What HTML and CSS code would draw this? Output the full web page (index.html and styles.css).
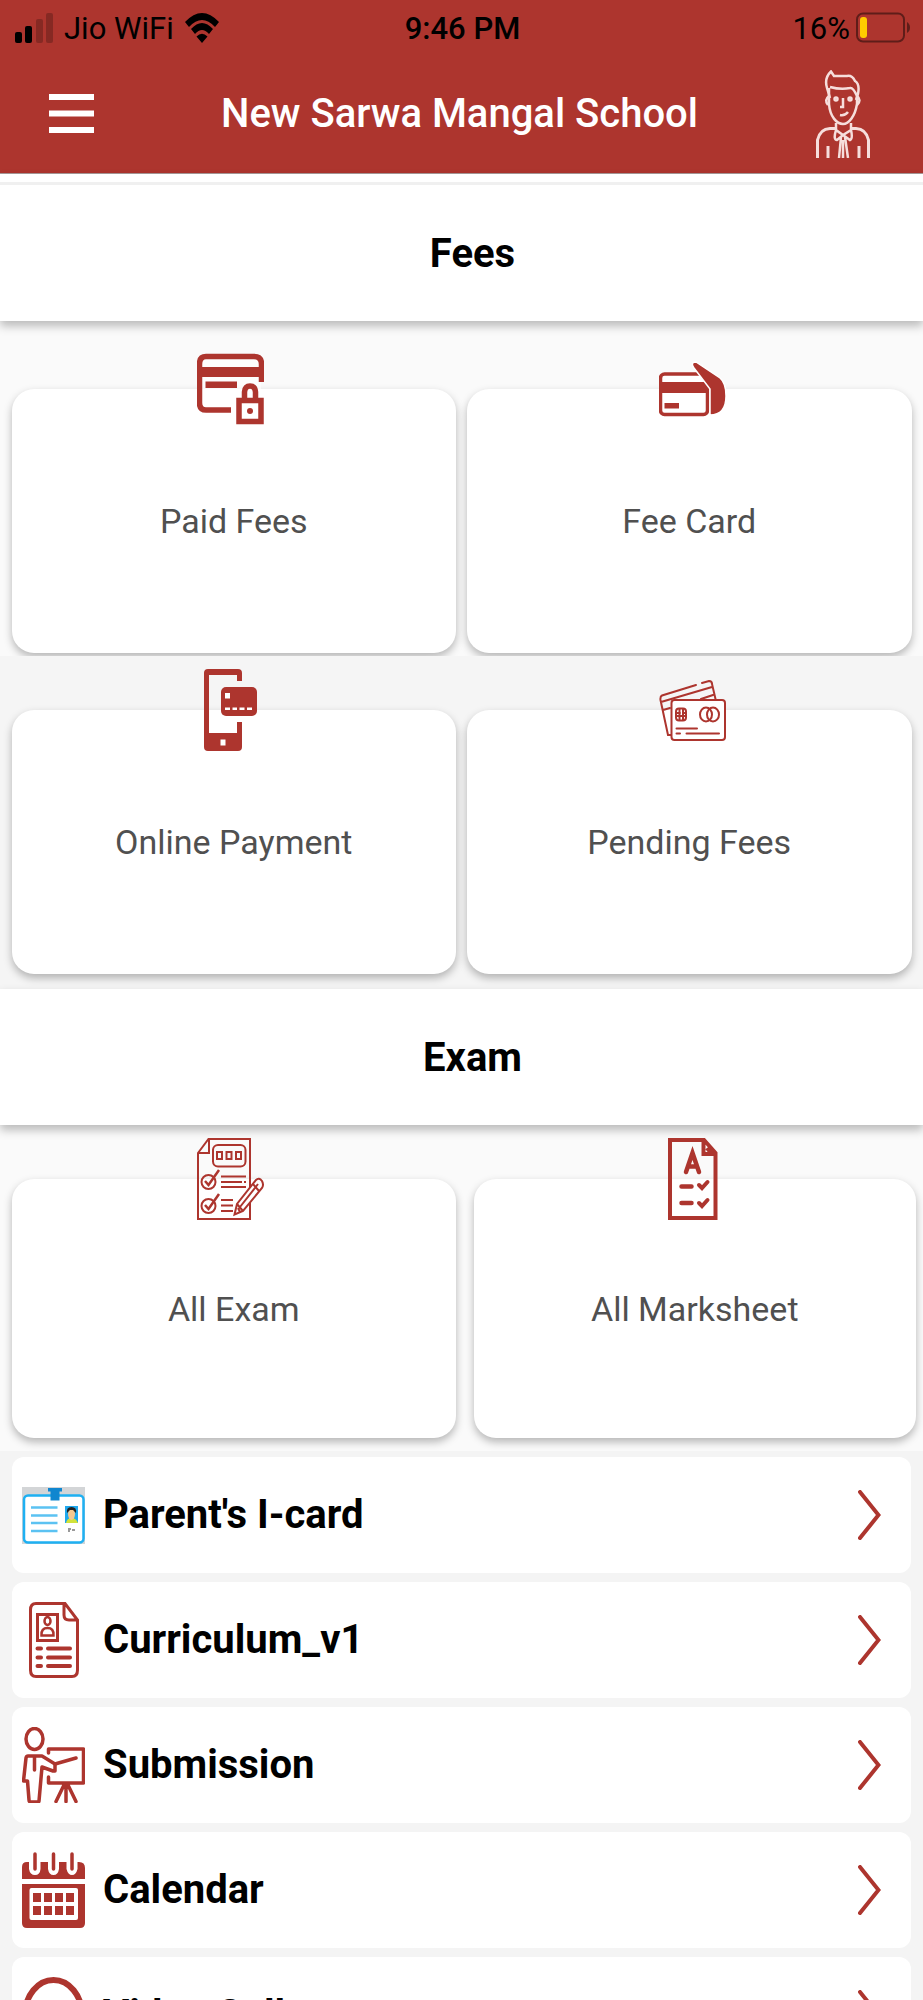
FILE: index.html
```html
<!DOCTYPE html>
<html lang="en">
<head>
<meta charset="utf-8">
<meta name="viewport" content="width=device-width, initial-scale=1">
<title>New Sarwa Mangal School</title>
<link rel="stylesheet" href="styles.css">
</head>
<body>
<div class="app">
  <header class="top">
    <div class="status">
      <div class="status-side">
        <svg class="signal" viewBox="0 0 38 30" aria-hidden="true"><rect x="0" y="19" width="7" height="11" rx="2"/><rect x="10" y="13" width="7" height="17" rx="2"/><g opacity=".22"><rect x="21" y="6" width="7" height="24" rx="2"/><rect x="31" y="0" width="7" height="30" rx="2"/></g></svg>
        <span>Jio WiFi</span>
        <svg class="wifi" viewBox="0 0 34 30" aria-hidden="true"><path d="M0 9Q17-9 34 9L30 14Q17 0 4 14ZM6 16Q17 4 28 16L24 21Q17 13 10 21ZM11.500 23.500Q17 18 22.500 23.500L17 30Z"/></svg>
      </div>
      <span class="clock">9:46 PM</span>
      <div class="status-side status-right">
        <span>16%</span>
        <svg class="battery" viewBox="0 0 54 32" aria-hidden="true"><rect x="1" y="1.500" width="47" height="28" rx="6" fill="none" stroke="#000" stroke-opacity=".45" stroke-width="2"/><rect x="4" y="5" width="7" height="21" rx="3" fill="#ffcc00"/><path d="M51 10Q54 12 54 15.500T51 21Z" fill-opacity=".45"/></svg>
      </div>
    </div>
    <div class="bar">
      <button class="icon-btn" aria-label="Menu"><svg class="menu" viewBox="0 0 45 39"><path d="M0 3H45M0 19.500H45M0 36H45" stroke="#fff" stroke-width="6"/></svg></button>
      <h1>New Sarwa Mangal School</h1>
      <button class="icon-btn profile" aria-label="Profile"><svg class="avatar" viewBox="0 0 54 88" fill="none" stroke="#f6dedc" stroke-width="2.500">
        <path d="M14 28 11 18Q8 8 15 1.500L18 6H31Q36 5 39 11 44 14 42 24L40 30"/>
        <path d="M14 17Q25 20 34 18 37 17 41 26M13 18 13 34C14 47 21 54 27 54S39 46 41 34V26"/>
        <path d="M13 26Q8 30 12 35M41 26Q46 30 41 35M27 28V37H24M24 45Q29 46 32 42"/>
        <circle cx="20" cy="29" r="1.500"/><circle cx="34" cy="29" r="1.500"/>
        <path d="M20 53V60L27 65 35 60V53M20 60Q17 70 21 70L27 65 34 70Q37 69 35 60M25 67 23 88M29 67 32 88M27 70V88"/>
        <path d="M1.500 88V70Q4 59 14 58.500H19M36 58.500H40Q50 59 52.500 70V88M12 76V88M43 76V88" stroke-width="3"/>
      </svg></button>
    </div>
  </header>

  <main>
    <h2 class="section first">Fees</h2>
    <div class="tiles light">
      <a class="tile" href="#paid">
        <svg class="tile-icon" viewBox="0 0 67 82"><rect x="2.500" y="8.500" width="61.500" height="53.500" rx="6" fill="#fff" fill-opacity=".6"/><path d="M34 62H9Q2.500 62 2.500 55V16Q2.500 8.500 9 8.500H57Q64.500 8.500 64.500 16V34" fill="none" stroke="#ad352e" stroke-width="5.500"/><path d="M2 19H64V29H2ZM8.500 33.500H40V40H8.500Z" fill="#ad352e"/><path d="M34 42H67V82H38V62H34Z" fill="#fff" fill-opacity=".9"/><path d="M42 52.500H64V73.500H42Z" fill="#fff" stroke="#ad352e" stroke-width="5.500"/><path d="M47.500 52V44Q48 38 53 38T58.500 44V52" fill="none" stroke="#ad352e" stroke-width="5.500"/><circle cx="53" cy="63" r="3" fill="#ad352e"/></svg>
        <span class="card">Paid Fees</span>
      </a>
      <a class="tile" href="#card">
        <svg class="tile-icon" viewBox="0 0 67 82"><rect x="1.500" y="26" width="47" height="40.500" rx="4" fill="#fff" stroke="#ad352e" stroke-width="3.500"/><path d="M2 34H48V45H2ZM5.500 55H20V60.500H5.500Z" fill="#ad352e"/><path d="M35 20Q31 14 37 14L61 30Q67 35 67 48 67 67 51 67V41Z" fill="#ad352e" stroke="#fff" stroke-width="1.500"/></svg>
        <span class="card">Fee Card</span>
      </a>
    </div>
    <div class="tiles">
      <a class="tile" href="#pay">
        <svg class="tile-icon" viewBox="0 0 67 82"><path d="M11 0H41Q45 0 45 4V12H40V6H12V64H40V53H45V78Q45 82 41 82H11Q7 82 7 78V4Q7 0 11 0Z" fill="#ad352e"/><rect x="24" y="18" width="36" height="29" rx="5" fill="#ad352e"/><path d="M28 24H33V29.500H28ZM28 38.500H33V41H28ZM35.500 38.500H40V41H35.500ZM42.500 38.500H47.500V41H42.500ZM50 38.500H55V41H50ZM23.500 70.500H28.500V76.500H23.500Z" fill="#fff"/></svg>
        <span class="card">Online Payment</span>
      </a>
      <a class="tile" href="#pending">
        <svg class="tile-icon" viewBox="0 0 67 82" fill="none" stroke="#ad352e" stroke-width="2" stroke-linecap="round"><path d="M37 16 3 26.500Q1 27.500 1.500 31L9 66H12M43 14 50 12Q53 12 53 15L56.500 30M2 33 53 18M4 41 11 39M42 30 54 26"/><rect x="12.500" y="31" width="53.500" height="40" rx="3" fill="#fff"/><rect x="17" y="39.500" width="10" height="12" rx="3"/><path d="M20.500 40V51M24 40V51M17.500 44H21M17.500 47H27M24 44H27M17.500 59.500H38M17.500 64.500H21M27.500 64.500H60"/><ellipse cx="47" cy="45.500" rx="6" ry="7"/><ellipse cx="54" cy="45.500" rx="6" ry="7"/></svg>
        <span class="card">Pending Fees</span>
      </a>
    </div>

    <h2 class="section">Exam</h2>
    <div class="tiles light exam">
      <a class="tile" href="#exam">
        <svg class="tile-icon" viewBox="0 0 67 82" fill="none" stroke="#ad352e" stroke-width="2"><path d="M1 15 11.500 1H53V81H1ZM1 15H12V1"/><rect x="16" y="7" width="32.500" height="21.500" rx="5"/><path d="M20 14H25V21H20ZM29.500 14H34.500V21H29.500ZM39 14H44V21H39ZM24 38.500H49M24 44H45M47 44H49M24 49H49M24 62H36M24 67.500H36M24 73H36" /><circle cx="11.500" cy="44" r="7"/><circle cx="11.500" cy="68" r="7"/><path d="M8 43 11.500 47 22 32M8 67 11.500 71 22 56" stroke-width="2.500"/><path d="M37.500 76.500 40 66 59 42Q62 39 65 43 67 47 65 50L46 73ZM40 66 46 73M43 69 61 46M56 46 62 53M41 70 43 74" fill="#fff"/></svg>
        <span class="card">All Exam</span>
      </a>
      <a class="tile" href="#marks">
        <svg class="tile-icon" viewBox="0 0 67 82" fill="none" stroke="#ad352e" stroke-width="4"><path d="M11 2H45L56.500 15V80H11ZM44.500 3V16H56M48 10 52 15"/><path d="M27 34 33.500 15 40 34M29 28.500H38M22.500 48.500H32.500M22.500 65H32.500" stroke-linecap="round" stroke-width="4.500"/><path d="M40 47 43 50 48.500 44M40 65 43 68 48.500 62" stroke-linecap="round" stroke-width="4"/></svg>
        <span class="card">All Marksheet</span>
      </a>
    </div>

    <nav class="list">
      <a class="row" href="#icard">
        <svg class="row-icon" viewBox="0 0 63 76"><path d="M0 10H63V67H0Z" fill="#d3d5d7"/><rect x="2" y="18.500" width="59.500" height="47" rx="4" fill="#fff" stroke="#1eb0f2" stroke-width="2.500"/><path d="M26 11H40V14.500H37.500V23.500H28.500V14.500H26Z" fill="#1086cf"/><path d="M9 30.500H35.500M9 38.500H35.500M9 46H35.500M9 54H35.500" stroke="#5bc2f2" stroke-width="2.500"/><path d="M43 29H56V46H43Z" fill="#1ea8ee"/><path d="M44 46Q45 41 49.500 41T56 46Z" fill="#d2e23a"/><ellipse cx="49.500" cy="37" rx="3.500" ry="6" fill="#f6c78f"/><path d="M45 36Q44 30 49.500 30T54 36L51 33H48Z" fill="#222"/><path d="M46 52H49M50 53H53M46 54H48" stroke="#999" stroke-width="2"/></svg>
        <span class="row-text">Parent's I-card</span>
        <svg class="chevron" viewBox="0 0 23 50"><path d="M2 2 20.500 25 2 48"/></svg>
      </a>
      <a class="row" href="#curriculum">
        <svg class="row-icon" viewBox="0 0 63 76" fill="none" stroke="#ad352e" stroke-width="3"><path d="M43 1.500H14Q8.500 1.500 8.500 8V68Q8.500 74.500 14 74.500H50Q55.500 74.500 55.500 68V18ZM42 2V13Q42 18 47 18H55"/><rect x="15.500" y="12.500" width="20" height="26"/><ellipse cx="25.500" cy="19" rx="3" ry="4" stroke-width="2.500"/><path d="M19.500 33.500Q19 26 25.500 26T31.500 33.500Z" stroke-width="2.500"/><path d="M15.500 46.500H19M26 46.500H48M15.500 55.500H19M26 55.500H48M15.500 64H19M26 64H48" stroke-linecap="round" stroke-width="4"/></svg>
        <span class="row-text">Curriculum_v1</span>
        <svg class="chevron" viewBox="0 0 23 50"><path d="M2 2 20.500 25 2 48"/></svg>
      </a>
      <a class="row" href="#submission">
        <svg class="row-icon" viewBox="0 0 63 76" fill="none" stroke="#ad352e" stroke-width="3.500" stroke-linecap="round" stroke-linejoin="round"><ellipse cx="12.500" cy="12" rx="8.500" ry="10.500"/><path d="M12.500 29V43M6 29H20L33 37V44H31L20 40 17 74Q17 75 15 75H9Q7 75 7 73L5.500 54H1.500L4 31Q4.500 29 6 29Z"/><path d="M33 37 54 31M26.500 26V22H61.500V56H26.500V50M44 57V74.500M42 58 34 74.500M46 58 54 74.500"/></svg>
        <span class="row-text">Submission</span>
        <svg class="chevron" viewBox="0 0 23 50"><path d="M2 2 20.500 25 2 48"/></svg>
      </a>
      <a class="row" href="#calendar">
        <svg class="row-icon" viewBox="0 0 63 76" fill="#ad352e"><path d="M0 27V15Q0 10 5 10H7V17Q8 23 13 23T18.500 17V10H26V17Q27 23 31.500 23T37 17V10H44.500V17Q46 23 50 23T55.500 17V10H57Q63 10 63 16V27Z"/><path d="M13 2V17M31.500 2V17M50 2V17" stroke="#ad352e" stroke-width="3.500" stroke-linecap="round"/><path d="M0 32H63V71Q63 76 58 76H5Q0 76 0 71Z"/><rect x="7.500" y="36" width="48.500" height="32" rx="2" fill="#fff"/><path d="M11 41H19V50H11ZM22 41H30V50H22ZM33 41H41V50H33ZM44 41H52V50H44ZM11 54H19V63H11ZM22 54H30V63H22ZM33 54H41V63H33ZM44 54H52V63H44Z"/></svg>
        <span class="row-text">Calendar</span>
        <svg class="chevron" viewBox="0 0 23 50"><path d="M2 2 20.500 25 2 48"/></svg>
      </a>
      <a class="row" href="#video">
        <svg class="row-icon" viewBox="0 0 63 76" fill="none" stroke="#ad352e" stroke-width="6"><ellipse cx="31.500" cy="38" rx="28.500" ry="35"/><path d="M18 28H37V48H18ZM37 36 47 29V47L37 40" stroke-width="4"/></svg>
        <span class="row-text">Video Call</span>
        <svg class="chevron" viewBox="0 0 23 50"><path d="M2 2 20.500 25 2 48"/></svg>
      </a>
    </nav>
  </main>
</div>
</body>
</html>
```
FILE: styles.css
```css
* { box-sizing: border-box; }
body {
  margin: 0;
  background: #f4f4f4;
  color: #000;
  font-family: Roboto, "Liberation Sans", sans-serif;
}
svg { display: block; flex: none; }
a { color: inherit; text-decoration: none; }
h1, h2 { margin: 0; }

.app {
  height: 100vh;
  overflow: hidden;
}

.top {
  background: #ad352e;
  border-bottom: 1px solid #a89a99;
}
.status {
  display: grid;
  grid-template-columns: 1fr auto 1fr;
  align-items: center;
  height: 56px;
  padding: 0 13px 0 15px;
  font-size: 31px;
}
.status-side { display: flex; align-items: center; gap: 11px; }
.status-right { justify-content: flex-end; gap: 6px; }
.clock { font-weight: 500; }
.signal { width: 38px; height: 30px; }
.wifi { width: 34px; height: 30px; }
.battery { width: 54px; height: 32px; }

.bar {
  display: grid;
  grid-template-columns: 1fr auto 1fr;
  align-items: center;
  height: 117px;
  padding: 0 53px 2px 49px;
}
.bar h1 {
  color: #fff;
  font-size: 40px;
  font-weight: 500;
}
.icon-btn {
  justify-self: start;
  padding: 0;
  border: 0;
  background: none;
}
.profile { justify-self: end; }
.menu { width: 45px; height: 39px; }
.avatar { width: 54px; height: 88px; }

.section {
  position: relative;
  display: flex;
  align-items: center;
  justify-content: center;
  height: 136px;
  padding-left: 22px;
  background: #fff;
  box-shadow: 0 5px 9px rgba(0, 0, 0, .26);
  font-size: 40px;
  font-weight: 700;
}
.section.first {
  height: 147px;
  padding-top: 12px;
  background: linear-gradient(#fff 8px, #f0f0f0 8px, #f0f0f0 11px, #fff 11px);
}

.tiles {
  display: grid;
  grid-template-columns: 1fr 1fr;
  padding: 13px 0 15px;
  background: #f5f5f5;
  overflow: hidden;
}
.tiles.light { background: #fafafa; }
.section.first + .tiles { padding: 27px 0 3px; }
.tile {
  display: flex;
  flex-direction: column;
  align-items: center;
}
.tile-icon {
  position: relative;
  width: 67px;
  height: 82px;
  margin-bottom: -41px;
}
.card {
  display: flex;
  align-items: center;
  justify-content: center;
  align-self: stretch;
  height: 264px;
  margin: 0 6px 0 12px;
  border-radius: 22px;
  background: #fff;
  box-shadow: 0 4px 9px rgba(0, 0, 0, .28);
  color: #505050;
  font-size: 34px;
}
.tile:nth-child(2) .card { margin: 0 11px 0 5px; }
.exam .tile:nth-child(2) .card { margin: 0 7px 0 12px; }
.exam .card { height: 259px; }
.exam { padding-bottom: 13px; }

.list {
  display: flex;
  flex-direction: column;
  gap: 9px;
  padding: 6px 12px;
}
.row {
  display: flex;
  align-items: center;
  gap: 18px;
  height: 116px;
  padding: 0 30px 0 10px;
  border-radius: 12px;
  background: #fff;
}
.row-icon { width: 63px; height: 76px; }
.row-text {
  flex: 1;
  padding-bottom: 1px;
  font-size: 40px;
  font-weight: 700;
}
.chevron {
  width: 23px;
  height: 50px;
  fill: none;
  stroke: #ad352e;
  stroke-width: 4;
  stroke-linecap: round;
}
```
